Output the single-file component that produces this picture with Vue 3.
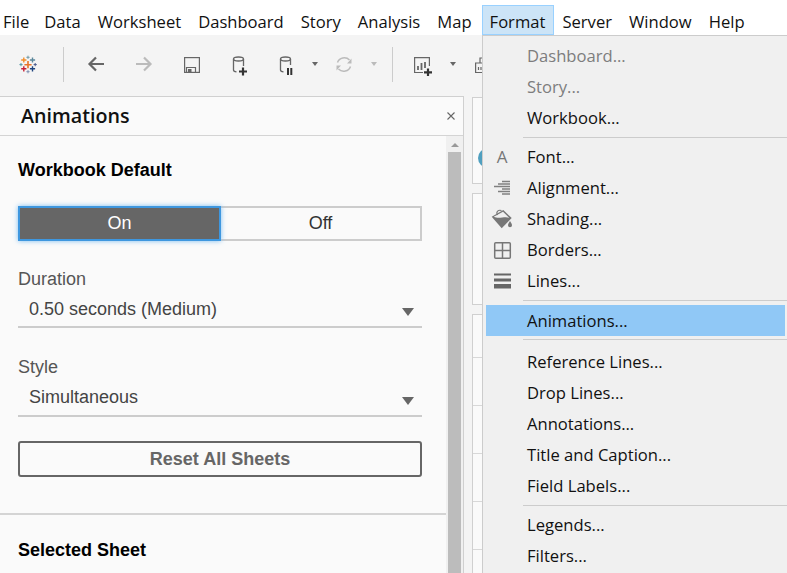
<script setup>
const menus = ['File', 'Data', 'Worksheet', 'Dashboard', 'Story', 'Analysis', 'Map', 'Format', 'Server', 'Window', 'Help']

const crosses = [
  { x: 12, y: 12.7, s: 3.6, w: 1.6, c: '#e8762b' },
  { x: 7.8, y: 8, s: 2.6, w: 1.4, c: '#f28e2b' },
  { x: 16.5, y: 8, s: 2.6, w: 1.4, c: '#5b879b' },
  { x: 7.8, y: 16.8, s: 2.6, w: 1.4, c: '#c72035' },
  { x: 16.5, y: 16.8, s: 2.6, w: 1.4, c: '#1f447e' },
  { x: 12, y: 5.3, s: 1.6, w: 1, c: '#7099a6' },
  { x: 12, y: 19.7, s: 1.6, w: 1, c: '#7e8fb0' },
  { x: 5, y: 12.6, s: 1.6, w: 1, c: '#5b9aa6' },
  { x: 19.2, y: 12.6, s: 1.6, w: 1, c: '#4a5a8c' }
]

const menuGroups = [
  [
    { label: 'Dashboard...', off: true },
    { label: 'Story...', off: true },
    { label: 'Workbook...' }
  ],
  [
    { label: 'Font...', icon: 'font' },
    { label: 'Alignment...', icon: 'align' },
    { label: 'Shading...', icon: 'shade' },
    { label: 'Borders...', icon: 'borders' },
    { label: 'Lines...', icon: 'lines' }
  ],
  [{ label: 'Animations...', active: true }],
  [
    { label: 'Reference Lines...' },
    { label: 'Drop Lines...' },
    { label: 'Annotations...' },
    { label: 'Title and Caption...' },
    { label: 'Field Labels...' }
  ],
  [{ label: 'Legends...' }, { label: 'Filters...' }]
]
</script>

<template>
  <div class="app">
    <div class="menubar">
      <div v-for="m in menus" :key="m" class="menubar-item" :class="{ open: m === 'Format' }">{{ m }}</div>
    </div>

    <div class="toolbar">
      <svg class="ic" viewBox="0 0 24 24">
        <g v-for="(k, i) in crosses" :key="i" :stroke="k.c" :stroke-width="k.w">
          <path :d="`M${k.x - k.s} ${k.y}H${k.x + k.s}M${k.x} ${k.y - k.s}V${k.y + k.s}`" />
        </g>
      </svg>
      <span class="tsep s1"></span>
      <svg class="ic m20" viewBox="0 0 24 24" fill="none" stroke="#666" stroke-width="2.2">
        <path d="M20 12H6M12 5.500 5.500 12l6.500 6.500" />
      </svg>
      <svg class="ic m24" viewBox="0 0 24 24" fill="none" stroke="#bbb" stroke-width="2.2">
        <path d="M4 12h14M12 5.500 18.500 12 12 18.500" />
      </svg>
      <svg class="ic m24" viewBox="0 0 24 24" fill="none" stroke="#666" stroke-width="1.2">
        <rect x="4.600" y="5.600" width="14.800" height="14.800" />
        <path d="M6.500 20.500V15.500H15.500V20.500" />
        <rect x="8" y="17" width="3.500" height="3.500" fill="#666" stroke="none" />
      </svg>
      <svg class="ic m24" viewBox="0 0 24 24" fill="none" stroke="#666" stroke-width="1.300">
        <ellipse cx="10.500" cy="7" rx="5" ry="2" />
        <path d="M5.500 7v11c0 1 1 1.700 3 1.900M15.500 7v7" />
        <path d="M15 15.500v8M11 19.500h8" stroke="#333" stroke-width="2.200" />
      </svg>
      <svg class="ic m22" viewBox="0 0 24 24" fill="none" stroke="#666" stroke-width="1.300">
        <ellipse cx="11.500" cy="7" rx="5" ry="2" />
        <path d="M6.500 7v11c0 1 1 1.700 3 1.900M16.500 7v6" />
        <path d="M14 16v7M17.300 16v7" stroke="#333" stroke-width="2" />
      </svg>
      <span class="caret c1"></span>
      <svg class="ic m13" viewBox="0 0 24 24" fill="none" stroke="#bbb" stroke-width="1.500">
        <path d="M6.500 10.500a7 6.500 0 0 1 12-2.500M19.500 14.500a7 6.500 0 0 1-12 2.500" />
        <path d="M20.500 6.500v5h-4.500zM5.500 18.500v-5h4.500z" fill="#bbb" stroke="none" />
      </svg>
      <span class="caret c2 dim"></span>
      <span class="tsep s2"></span>
      <svg class="ic m17" viewBox="0 0 24 24" fill="none" stroke="#666" stroke-width="1.200">
        <path d="M13 20.500H4.600V5.600H19.400V14" />
        <path d="M8 18v-4M11.500 18v-7M15 16v-6" stroke-width="1.800" />
        <path d="M18 16.500v7.500M14 20.300h8" stroke="#333" stroke-width="2.200" />
      </svg>
      <span class="caret c3"></span>
      <svg class="ic m16" viewBox="0 0 24 24" fill="none" stroke="#666" stroke-width="1.200">
        <path d="M12 11H3.600V20.500H16M8 11V6h4" />
        <path d="M6.500 18v-3M9 18v-3" />
      </svg>
    </div>

    <div class="workspace">
      <section class="panel">
        <header class="panel-head">
          <h1>Animations</h1>
          <svg class="close" viewBox="0 0 10 10" fill="none" stroke="#666" stroke-width="1.100">
            <path d="M1.500 1.500l7 7M8.500 1.500l-7 7" />
          </svg>
        </header>
        <div class="panel-body">
          <div class="panel-content">
            <div class="block">
              <h2>Workbook Default</h2>
              <div class="toggle">
                <div class="seg on">On</div>
                <div class="seg">Off</div>
              </div>
              <div class="field-label duration">Duration</div>
              <div class="select">
                <span>0.50 seconds (Medium)</span>
                <i class="tri"></i>
              </div>
              <div class="field-label style-label">Style</div>
              <div class="select style-select">
                <span>Simultaneous</span>
                <i class="tri"></i>
              </div>
              <button class="reset">Reset All Sheets</button>
            </div>
            <div class="block second">
              <h2>Selected Sheet</h2>
            </div>
          </div>
          <div class="scrollbar">
            <i class="up"></i>
            <div class="thumb"></div>
          </div>
        </div>
      </section>

      <div class="cards">
        <div class="card first"><span class="dot"></span></div>
        <div class="card second-card"></div>
        <div class="card rows">
          <div></div><div></div><div></div><div></div><div></div>
        </div>
      </div>
    </div>

    <div class="menu">
      <template v-for="(group, g) in menuGroups" :key="g">
        <div v-if="g > 0" class="menu-sep" :class="{ wide: g === 3 }"></div>
        <div v-for="item in group" :key="item.label" class="menu-item" :class="{ off: item.off, active: item.active }">
          <span class="slot">
            <span v-if="item.icon === 'font'" class="font-a">A</span>
            <svg v-else-if="item.icon === 'align'" viewBox="0 0 24 24" stroke="#808080" stroke-width="1.300">
              <path d="M12 5.500h8M8 8h12M4 10.500h16M12 13h8M8 15.500h12M12 18h8" />
            </svg>
            <svg v-else-if="item.icon === 'shade'" viewBox="0 0 24 24">
              <path d="M1.700 9.700 13.300 3 21.700 11 11.700 21.300z" fill="#777" />
              <path d="M3.800 9.800 13 4.800 19.200 10.700C14 8.800 9.500 12.500 3.800 9.800z" fill="#f0f0f0" />
              <path d="M7.500 8C5.500 4.500 8.500 2.500 11.500 3.500" fill="none" stroke="#777" stroke-width="1.100" />
              <path d="M20 14c-1.400 2.300-2 3.200-2 4.200a2 2 0 0 0 4 0c0-1-.6-1.900-2-4.200z" fill="#777" />
            </svg>
            <svg v-else-if="item.icon === 'borders'" viewBox="0 0 24 24" fill="none" stroke="#777" stroke-width="1.500">
              <rect x="4.700" y="4.700" width="15.600" height="15.600" rx="1" />
              <path d="M12.500 4.700v15.600M4.700 12.500h15.600" />
            </svg>
            <svg v-else-if="item.icon === 'lines'" viewBox="0 0 24 24" fill="#666">
              <rect x="4" y="4.500" width="17" height="2" />
              <rect x="4" y="9.500" width="17" height="3" />
              <rect x="4" y="15" width="17" height="4.500" />
            </svg>
          </span>
          <span>{{ item.label }}</span>
        </div>
      </template>
    </div>
  </div>
</template>

<style>
html, body {
  margin: 0;
  background: #fff;
}
</style>

<style scoped>
.app {
  position: relative;
  width: 787px;
  height: 573px;
  overflow: hidden;
  background: #fff;
  font-family: "Liberation Sans", Arial, sans-serif;
}

.menubar {
  display: flex;
  height: 35px;
  padding-top: 5px;
  box-sizing: border-box;
  font-family: "Open Sans", sans-serif;
  font-size: 16.6px;
  color: #111;
}
.menubar-item {
  padding: 0 8px;
  line-height: 31px;
  height: 30px;
  box-sizing: border-box;
  border: 1px solid transparent;
  border-bottom: 0;
  margin-right: -1px;
}
.menubar-item:first-child {
  margin-left: -6px;
  margin-right: -3px;
}
.menubar-item.open {
  margin-left: 2px;
  padding-left: 7px;
  background: #cce4f7;
  border: 1px solid #99d1ff;
}

.toolbar {
  display: flex;
  align-items: center;
  height: 61px;
  padding: 0 0 3px 16px;
  box-sizing: border-box;
  background: #f4f4f4;
}
.ic {
  width: 24px;
  height: 24px;
  flex: none;
  overflow: visible;
}
.m13 { margin-left: 13px; }
.m16 { margin-left: 16px; }
.m17 { margin-left: 17px; }
.m20 { margin-left: 20px; }
.m22 { margin-left: 22px; }
.m24 { margin-left: 24px; }
.tsep {
  width: 1px;
  height: 35px;
  flex: none;
  background: #ccc;
}
.tsep.s1 { margin-left: 23px; }
.tsep.s2 { margin-left: 15px; }
.caret {
  width: 0;
  height: 0;
  flex: none;
  border: 3.5px solid transparent;
  border-top: 4px solid #666;
  border-bottom: 0;
}
.caret.dim { border-top-color: #bbb; }
.caret.c1 { margin-left: 14px; }
.caret.c2 { margin-left: 16px; }
.caret.c3 { margin-left: 16px; }

.workspace {
  display: flex;
  height: 477px;
  background: #f4f4f4;
}

.panel {
  width: 464px;
  flex: none;
  display: flex;
  flex-direction: column;
  box-sizing: border-box;
  background: #fafafa;
  border-top: 1px solid #d0d0d0;
  border-right: 1px solid #d0d0d0;
}
.panel-head {
  display: flex;
  align-items: center;
  justify-content: space-between;
  height: 39px;
  flex: none;
  box-sizing: border-box;
  padding: 0 7px 1px 21px;
  border-bottom: 1px solid #d4d4d4;
}
.panel-head h1 {
  margin: 0;
  font-family: "Open Sans", sans-serif;
  font-size: 19.7px;
  font-weight: 600;
  color: #111;
}
.close {
  width: 10px;
  height: 10px;
}
.panel-body {
  flex: 1;
  display: flex;
  min-height: 0;
}
.panel-content {
  flex: 1;
  min-width: 0;
}
.block {
  padding: 25px 24px 0 18px;
  height: 379px;
  box-sizing: border-box;
  border-bottom: 2px solid #d4d4d4;
}
.block.second {
  height: auto;
  padding-top: 26px;
  border: 0;
}
h2 {
  margin: 0;
  font-size: 18px;
  line-height: 18px;
  font-weight: 700;
  color: #000;
}
.toggle {
  display: flex;
  height: 35px;
  margin-top: 27px;
  font-size: 18px;
}
.seg {
  flex: 1;
  display: flex;
  align-items: center;
  justify-content: center;
  box-sizing: border-box;
  border: 2px solid #ccc;
  border-left: 0;
  background: #fafafa;
  color: #333;
}
.seg.on {
  background: #666;
  color: #fff;
  border: 2px solid #3e97df;
  box-shadow: 0 0 5px #7cbdf0;
  position: relative;
}
.field-label {
  font-size: 18px;
  line-height: 18px;
  color: #555;
}
.field-label.duration { margin-top: 29px; }
.field-label.style-label { margin-top: 30px; }
.select {
  display: flex;
  align-items: center;
  justify-content: space-between;
  height: 36px;
  box-sizing: border-box;
  padding: 0 8px 0 11px;
  margin-top: 4px;
  border-bottom: 2px solid #ccc;
  font-size: 18px;
  color: #444;
}
.select.style-select {
  margin-top: 5px;
  padding-bottom: 2px;
}
.tri {
  width: 0;
  height: 0;
  border: 6px solid transparent;
  border-top: 8px solid #666;
  border-bottom: 0;
  margin-top: 6px;
}
.style-select .tri { margin-top: 8px; }
.reset {
  display: block;
  width: 100%;
  height: 36px;
  margin-top: 24px;
  padding: 0;
  background: #fafafa;
  border: 2px solid #666;
  border-radius: 3px;
  font-family: inherit;
  font-size: 18px;
  font-weight: 700;
  color: #666;
}
.scrollbar {
  width: 17px;
  flex: none;
  background: #f0f0f0;
  display: flex;
  flex-direction: column;
  align-items: center;
  padding-top: 7px;
  box-sizing: border-box;
}
.up {
  width: 0;
  height: 0;
  border: 4px solid transparent;
  border-bottom: 4px solid #999;
  border-top: 0;
}
.thumb {
  width: 13px;
  flex: 1;
  margin-top: 5px;
  background: #bcbcbc;
}

.cards {
  flex: 1;
  min-height: 0;
  padding: 1px 0 0 8px;
  display: flex;
  flex-direction: column;
  gap: 9px;
}
.card {
  box-sizing: border-box;
  background: #fafafa;
  border: 1px solid #d0d0d0;
  border-right: 0;
}
.card.first {
  height: 87px;
  flex: none;
  position: relative;
  overflow: hidden;
}
.dot {
  position: absolute;
  left: 5px;
  top: 50px;
  width: 20px;
  height: 20px;
  border-radius: 50%;
  background: #4f9fbf;
}
.card.second-card {
  height: 112px;
  flex: none;
}
.card.rows {
  flex: 1;
  min-height: 0;
  overflow: hidden;
  border-bottom: 0;
  padding-top: 42px;
}
.rows div {
  height: 47px;
  border-top: 1px solid #d8d8d8;
}

.menu {
  position: absolute;
  left: 482px;
  top: 35px;
  width: 305px;
  height: 538px;
  box-sizing: border-box;
  padding: 5px 2px 0 3px;
  background: #f0f0f0;
  border-top: 1px solid #ccc;
  border-left: 1px solid #ccc;
  font-family: "Open Sans", sans-serif;
  font-size: 16.6px;
  color: #111;
}
.menu-item {
  display: flex;
  align-items: center;
  height: 31px;
  box-sizing: border-box;
  padding-bottom: 2px;
}
.menu-item.off { color: #7d7d7d; }
.menu-item.active {
  background: #90c8f6;
  padding-bottom: 0;
}
.slot {
  width: 41px;
  height: 24px;
  flex: none;
  display: flex;
  justify-content: center;
  padding: 0 13px 0 4px;
  box-sizing: border-box;
}
.slot svg {
  width: 24px;
  height: 24px;
  flex: none;
}
.font-a {
  font-family: "Open Sans", sans-serif;
  font-size: 17px;
  font-weight: 500;
  line-height: 24px;
  color: #777;
}
.menu-sep {
  height: 8px;
  margin-left: 37px;
  margin-right: -2px;
  position: relative;
}
.menu-sep.wide { height: 11px; }
.menu-sep::after {
  content: "";
  position: absolute;
  left: 0;
  right: 0;
  top: 3px;
  height: 1px;
  background: #ccc;
}
</style>
